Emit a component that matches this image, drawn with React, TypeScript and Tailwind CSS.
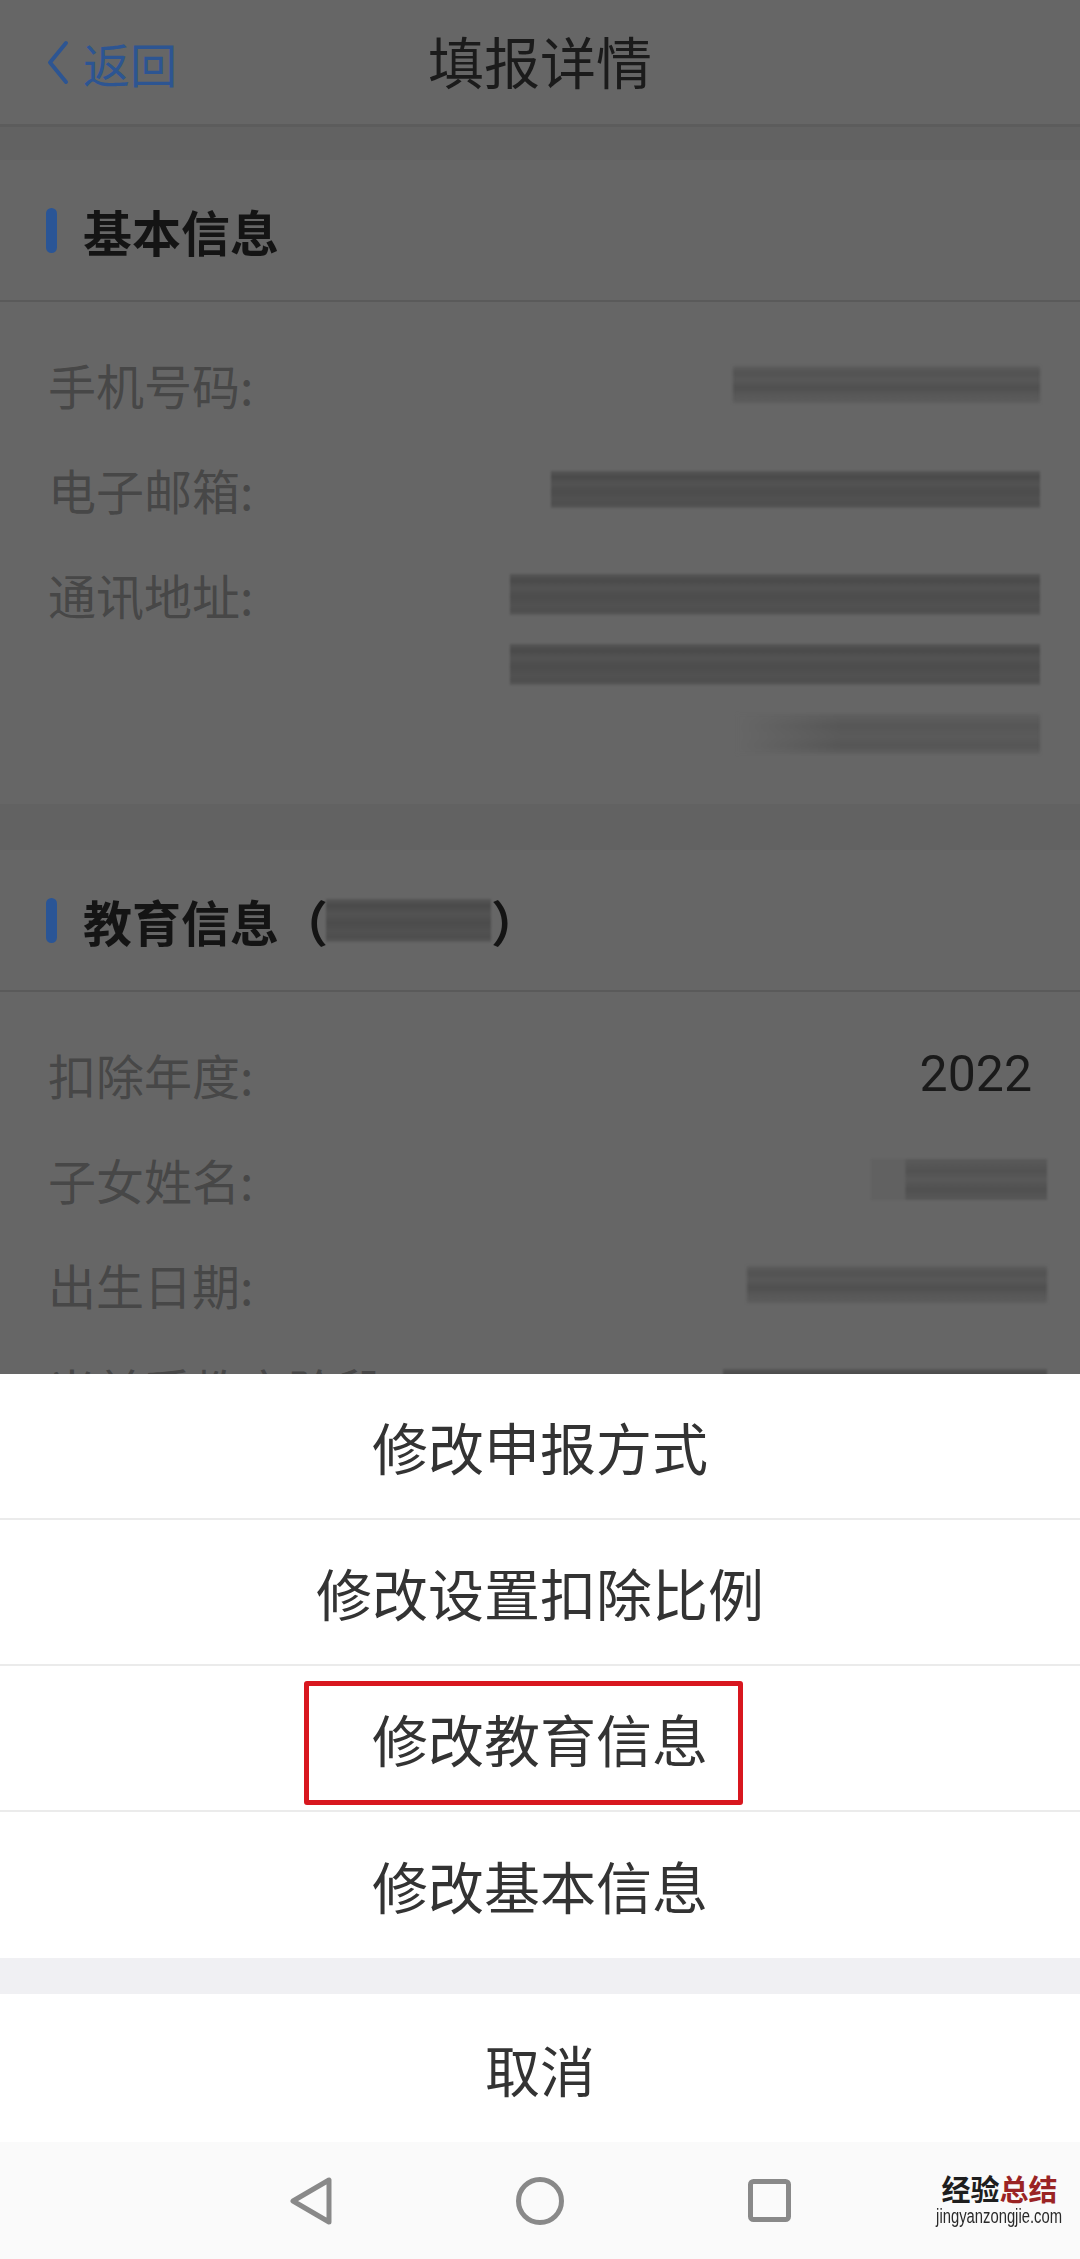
import React from "react";

const barA =
  "bg-[linear-gradient(180deg,#5e5e5e_0%,#525252_18%,#585858_38%,#4f4f4f_58%,#575757_78%,#5d5d5d_100%)] blur-[1.5px]";
const barB =
  "bg-[linear-gradient(180deg,#575757_0%,#4a4a4a_15%,#535353_35%,#4c4c4c_55%,#515151_75%,#4e4e4e_90%,#5a5a5a_100%)] blur-[1.2px]";
const barFade =
  "bg-[linear-gradient(90deg,#666666_0%,rgba(102,102,102,0)_35%),linear-gradient(180deg,#5f5f5f_0%,#565656_30%,#5a5a5a_55%,#555555_80%,#5f5f5f_100%)] blur-[1.5px]";
const barChild =
  "bg-[linear-gradient(90deg,#616161_0%,#616161_19%,rgba(0,0,0,0)_20%),linear-gradient(180deg,#5a5a5a_0%,#525252_30%,#595959_50%,#505050_75%,#585858_100%)] blur-[1px]";

function Row({ label, children }: { label: string; children: React.ReactNode }) {
  return (
    <div className="flex justify-between items-start">
      <div className="text-[48px] leading-[70px] text-[#474747] whitespace-nowrap">{label}</div>
      <div className="flex flex-col items-end">{children}</div>
    </div>
  );
}

function Line({ children }: { children: React.ReactNode }) {
  return <div className="h-[70px] flex items-center justify-end">{children}</div>;
}

function SectionHeader({ children }: { children: React.ReactNode }) {
  return (
    <div className="h-[142px] flex items-center pl-[46px] border-b-2 border-[#5a5a5a]">
      <div className="w-[11px] h-[45px] rounded-full bg-[#2a5596]" />
      <div className="ml-[26px] flex items-center text-[49px] font-bold text-[#141414] leading-none">
        {children}
      </div>
    </div>
  );
}

function SheetItem({ text, last, boxed }: { text: string; last?: boolean; boxed?: boolean }) {
  return (
    <div
      className={
        "relative h-[146px] flex items-center justify-center text-[56px] text-[#333333] " +
        (last ? "" : "border-b-2 border-[#ebebeb]")
      }
    >
      {boxed && (
        <div className="absolute left-[304px] top-[15px] w-[439px] h-[124px] border-[5px] border-[#d8171f] rounded-[3px]" />
      )}
      <span>{text}</span>
    </div>
  );
}

export default function App() {
  return (
    <div className="relative w-[1080px] h-[2259px] overflow-hidden bg-[#666666] font-['Noto_Sans_CJK_SC','Noto_Sans',sans-serif]">
      {/* Top bar */}
      <header className="h-[127px] grid grid-cols-[1fr_auto_1fr] items-center border-b-[3px] border-[#5c5c5c]">
        <div className="flex items-center pl-[45px] gap-[13px] text-[#2d5592]">
          <svg width="25" height="45" viewBox="0 0 25 45" fill="none">
            <path d="M21 3 L5 22.5 L21 42" stroke="#2d5592" strokeWidth="4" strokeLinecap="round" strokeLinejoin="round" />
          </svg>
          <span className="text-[47px] leading-none">返回</span>
        </div>
        <div className="text-[56px] leading-none text-[#1b1b1b] -mt-[4px]">填报详情</div>
        <div />
      </header>
      <div className="h-[33px] bg-[#626262]" />

      {/* Basic info */}
      <section>
        <SectionHeader>基本信息</SectionHeader>
        <div className="pt-[47px] pb-[35px] pl-[48px] pr-[40px] flex flex-col gap-[35px]">
          <Row label="手机号码:">
            <Line>
              <div className={"w-[307px] h-[37px] " + barA} />
            </Line>
          </Row>
          <Row label="电子邮箱:">
            <Line>
              <div className={"w-[489px] h-[37px] " + barB} />
            </Line>
          </Row>
          <Row label="通讯地址:">
            <Line>
              <div className={"w-[530px] h-[41px] " + barB} />
            </Line>
            <Line>
              <div className={"w-[530px] h-[41px] " + barB} />
            </Line>
            <Line>
              <div className={"w-[303px] h-[40px] " + barFade} />
            </Line>
          </Row>
        </div>
      </section>
      <div className="h-[46px] bg-[#626262]" />

      {/* Education info */}
      <section>
        <SectionHeader>
          <span>教育信息（</span>
          <span className={"inline-block w-[165px] h-[43px] -ml-[2px] " + barB} />
          <span>）</span>
        </SectionHeader>
        <div className="pt-[47px] pb-[35px] pl-[48px] pr-[40px] flex flex-col gap-[35px]">
          <Row label="扣除年度:">
            <Line>
              <span className="pr-[8px] font-['Roboto',sans-serif] text-[50px] text-[#1a1a1a] leading-none">2022</span>
            </Line>
          </Row>
          <Row label="子女姓名:">
            <Line>
              <div className={"w-[176px] h-[41px] -mr-[7px] " + barChild} />
            </Line>
          </Row>
          <Row label="出生日期:">
            <Line>
              <div className={"w-[300px] h-[37px] -mr-[7px] " + barA} />
            </Line>
          </Row>
          <Row label="当前受教育阶段:">
            <Line>
              <div className={"w-[324px] h-[40px] -mr-[7px] " + barB} />
            </Line>
          </Row>
        </div>
      </section>

      {/* Bottom action sheet */}
      <div className="absolute left-0 bottom-0 w-full flex flex-col">
        <div className="bg-white">
          <SheetItem text="修改申报方式" />
          <SheetItem text="修改设置扣除比例" />
          <SheetItem text="修改教育信息" boxed />
          <SheetItem text="修改基本信息" last />
        </div>
        <div className="h-[36px] bg-[#f0f0f3]" />
        <div className="h-[148px] bg-white flex items-center justify-center text-[55px] text-[#333333]">取消</div>
        <div className="relative h-[117px] bg-[#fafafa] flex items-center justify-center gap-[184px]">
          <svg width="42" height="48" viewBox="0 0 42 48" fill="none">
            <path d="M39 3 L39 45 L3 24 Z" stroke="#898989" strokeWidth="5" strokeLinejoin="round" />
          </svg>
          <svg width="48" height="48" viewBox="0 0 48 48" fill="none">
            <circle cx="24" cy="24" r="21.5" stroke="#898989" strokeWidth="5" />
          </svg>
          <svg width="43" height="43" viewBox="0 0 43 43" fill="none">
            <rect x="2.5" y="2.5" width="38" height="38" rx="3" stroke="#898989" strokeWidth="5" />
          </svg>
          <div className="absolute left-[936px] top-[28px] w-[127px] flex flex-col items-center">
            <div className="flex text-[29px] leading-[36px] font-bold">
              <span className="text-[#1e1e1e]">经验</span>
              <span className="text-[#9a2424]">总结</span>
            </div>
            <div className="font-['Liberation_Sans',sans-serif] text-[20px] leading-[20px] text-[#2a2a2a] whitespace-nowrap scale-x-[0.74]">
              jingyanzongjie.com
            </div>
          </div>
        </div>
      </div>
    </div>
  );
}
